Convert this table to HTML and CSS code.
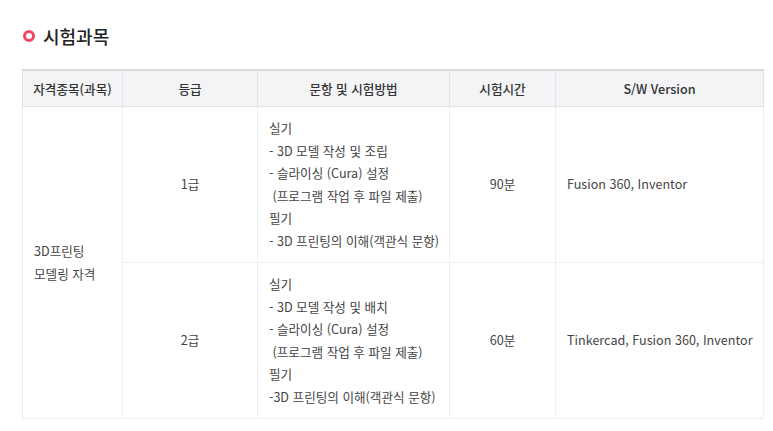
FILE: index.html
```html
<!DOCTYPE html>
<html lang="ko">
<head>
<meta charset="utf-8">
<link rel="stylesheet" href="styles.css">
</head>
<body>
<div class="wrap">
  <h2 class="title"><span class="dot"></span>시험과목</h2>
  <table class="exam">
    <colgroup>
      <col class="c1"><col class="c2"><col class="c3"><col class="c4"><col class="c5">
    </colgroup>
    <thead>
      <tr>
        <th>자격종목(과목)</th>
        <th>등급</th>
        <th>문항 및 시험방법</th>
        <th>시험시간</th>
        <th>S/W Version</th>
      </tr>
    </thead>
    <tbody>
      <tr>
        <td rowspan="2" class="left">3D프린팅<br>모델링 자격</td>
        <td class="center">1급</td>
        <td class="left">실기<br>- 3D 모델 작성 및 조립<br>- 슬라이싱 (Cura) 설정<br>&nbsp;(프로그램 작업 후 파일 제출)<br>필기<br>- 3D 프린팅의 이해(객관식 문항)</td>
        <td class="center">90분</td>
        <td class="left">Fusion 360, Inventor</td>
      </tr>
      <tr>
        <td class="center">2급</td>
        <td class="left">실기<br>- 3D 모델 작성 및 배치<br>- 슬라이싱 (Cura) 설정<br>&nbsp;(프로그램 작업 후 파일 제출)<br>필기<br>-3D 프린팅의 이해(객관식 문항)</td>
        <td class="center">60분</td>
        <td class="left">Tinkercad, Fusion 360, Inventor</td>
      </tr>
    </tbody>
  </table>
</div>
</body>
</html>
```

FILE: styles.css
```css
html, body {
  margin: 0;
  padding: 0;
  background: #fff;
}
body {
  font-family: "Noto Sans CJK KR", "Noto Sans", sans-serif;
  color: #444;
}
.wrap {
  padding: 23px 10px 0 22px;
}
.title {
  display: flex;
  align-items: center;
  gap: 8px;
  margin: 0 0 20px 0;
  font-size: 18px;
  font-weight: 500;
  line-height: 26px;
  color: #222;
}
.dot {
  display: inline-block;
  box-sizing: border-box;
  width: 12px;
  height: 12px;
  border-radius: 50%;
  border: 3.5px solid #ef4767;
  margin-left: 1px;
}
.exam {
  border-collapse: collapse;
  width: 741px;
  font-size: 12.6px;
  table-layout: fixed;
}
.c1 { width: 100px; }
.c2 { width: 135px; }
.c3 { width: 192px; }
.c4 { width: 106px; }
.c5 { width: 208px; }
.exam th {
  background: #f3f4f6;
  border: 1px solid #e3e4e7;
  border-top: 2px solid #d8d9dc;
  font-weight: 500;
  color: #333;
  padding: 8px 4px;
  line-height: 19px;
  text-align: center;
  white-space: nowrap;
}
.exam td {
  border: 1px solid #eeeff1;
  padding: 10px 11px;
  line-height: 22.5px;
  vertical-align: middle;
  color: #444;
  white-space: nowrap;
}
.exam td.center { text-align: center; }
.exam td.left { text-align: left; }
```
